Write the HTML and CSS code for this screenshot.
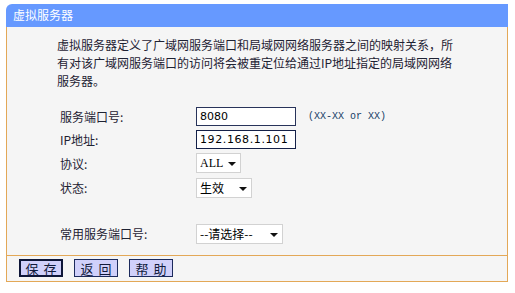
FILE: index.html
```html
<!DOCTYPE html>
<html lang="zh-CN">
    <head>
        <meta charset="UTF-8" />
        <title>虚拟服务器</title>
        <link rel="stylesheet" href="styles.css">
    </head>
    <body>
        <div class="panel">
            <div class="panel-title">虚拟服务器</div>
            <div class="panel-body">
                <p class="intro">虚拟服务器定义了广域网服务端口和局域网网络服务器之间的映射关系，所有对该广域网服务端口的访问将会被重定位给通过IP地址指定的局域网网络服务器。</p>
                <div class="form">
                    <label class="row-label">服务端口号:</label>
                    <div class="row-field">
                        <input class="text" type="text" value="8080" />
                        <span class="hint">(XX-XX or XX)</span>
                    </div>

                    <label class="row-label">IP地址:</label>
                    <div class="row-field">
                        <input class="text ip" type="text" value="192.168.1.101" />
                    </div>

                    <label class="row-label">协议:</label>
                    <div class="row-field">
                        <span class="select select-proto"><select><option>ALL</option><option>TCP</option><option>UDP</option></select></span>
                    </div>

                    <label class="row-label">状态:</label>
                    <div class="row-field">
                        <span class="select select-state"><select><option>生效</option><option>失效</option></select></span>
                    </div>

                    <div class="spacer"></div>

                    <label class="row-label">常用服务端口号:</label>
                    <div class="row-field">
                        <span class="select select-common"><select><option>--请选择--</option></select></span>
                    </div>
                </div>
            </div>
            <div class="panel-foot">
                <button class="btn btn-default">保 存</button>
                <button class="btn">返 回</button>
                <button class="btn">帮 助</button>
            </div>
        </div>
    </body>
</html>
```

FILE: styles.css
```css
body {
    margin: 0;
    padding: 4px 0 0 6px;
    background: #ffffff;
    font-family: "Noto Sans CJK SC", "DejaVu Sans", sans-serif;
    font-size: 12px;
    color: #1e2233;
}
.panel {
    width: 502px;
}
.panel-title {
    height: 23px;
    line-height: 22px;
    padding-left: 7px;
    background: #6699ff;
    color: #ffffff;
    font-size: 12px;
    border-top-left-radius: 6px;
}
.panel-body {
    background: #f5f5f5;
    border-left: 1px solid #e3a857;
    border-right: 1px solid #e3a857;
    border-bottom: 1px solid #e3a857;
    height: 228px;
    overflow: hidden;
}
.intro {
    margin: 0;
    padding: 9px 0 0 50px;
    width: 398px;
    line-height: 18px;
}
.form {
    display: grid;
    grid-template-columns: 136px auto;
    grid-template-rows: 23px 23px 24px 25px 21px 25px;
    margin: 15px 0 0 53px;
}
.row-label,
.row-field {
    display: flex;
    align-items: center;
}
.row-field {
    gap: 12px;
}
.spacer {
    grid-column: 1 / 3;
}
.text {
    box-sizing: border-box;
    width: 100px;
    height: 19px;
    margin: 0;
    padding: 0 3px;
    border: 1px solid #28335a;
    background: #ffffff;
    font-family: "DejaVu Sans", sans-serif;
    font-size: 11px;
    color: #000000;
    outline: none;
}
.text.ip {
    border-color: #142048;
    letter-spacing: 0.6px;
}
.hint {
    font-family: "Liberation Mono", monospace;
    font-size: 10px;
    color: #173e66;
}
.select {
    position: relative;
    display: inline-block;
    height: 20px;
}
.select select {
    appearance: none;
    -webkit-appearance: none;
    box-sizing: border-box;
    height: 20px;
    margin: 0;
    padding: 0 0 0 3px;
    border: 1px solid #d2d2d2;
    border-radius: 0;
    background: #ffffff;
    font-family: "Liberation Serif", "Noto Sans CJK SC", serif;
    font-size: 12px;
    color: #000000;
}
.select::after {
    content: "";
    position: absolute;
    right: 5px;
    top: 9px;
    border-left: 4px solid transparent;
    border-right: 4px solid transparent;
    border-top: 4px solid #111111;
    pointer-events: none;
}
.select-proto select {
    width: 45px;
}
.select-state select {
    width: 56px;
    font-family: "Noto Sans CJK SC", sans-serif;
}
.select-common select {
    width: 87px;
    font-family: "Noto Sans CJK SC", sans-serif;
}
.panel-foot {
    display: flex;
    gap: 11px;
    height: 26px;
    padding: 3px 0 0 12px;
    box-sizing: border-box;
    background: #f5f5f5;
    border-left: 1px solid #e3a857;
    border-right: 1px solid #e3a857;
    border-bottom: 1px solid #e3a857;
}
.btn {
    box-sizing: border-box;
    width: 44px;
    height: 18px;
    margin: 0;
    padding: 0;
    border: 1px solid #1c2a5c;
    background: #d0d0fa;
    font-family: "Noto Sans CJK SC", sans-serif;
    font-size: 13px;
    line-height: 15px;
    color: #111a3a;
    word-spacing: 2px;
}
.btn-default {
    border: 2px solid #0e1638;
}
```
